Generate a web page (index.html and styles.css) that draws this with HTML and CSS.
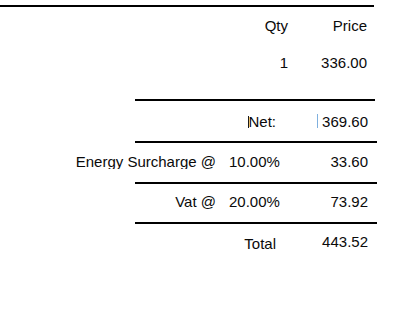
FILE: index.html
```html
<!DOCTYPE html>
<html>
<head>
<meta charset="utf-8">
<link rel="stylesheet" href="styles.css">
</head>
<body>
<div class="sheet">
  <div class="rule-top"></div>
  <div class="row head">
    <div class="cell"></div>
    <div class="cell mid-r">Qty</div>
    <div class="cell val price">Price</div>
  </div>
  <div class="row item">
    <div class="cell"></div>
    <div class="cell mid-r">1</div>
    <div class="cell val price">336.00</div>
  </div>
  <div class="rule rule-first"></div>
  <div class="row sum sum-net">
    <div class="cell"></div>
    <div class="cell mid-lbl"><span class="caret-dark">Net:</span></div>
    <div class="cell val"><span class="caret-blue">369.60</span></div>
  </div>
  <div class="rule"></div>
  <div class="row sum sum-energy">
    <div class="cell lbl clip">Energy Surcharge @</div>
    <div class="cell pct">10.00%</div>
    <div class="cell val">33.60</div>
  </div>
  <div class="rule"></div>
  <div class="row sum sum-vat">
    <div class="cell lbl">Vat @</div>
    <div class="cell pct">20.00%</div>
    <div class="cell val">73.92</div>
  </div>
  <div class="rule"></div>
  <div class="row sum sum-total">
    <div class="cell"></div>
    <div class="cell mid-lbl total-lbl">Total</div>
    <div class="cell val">443.52</div>
  </div>
</div>
</body>
</html>
```

FILE: styles.css
```css
html, body {
  margin: 0;
  padding: 0;
  background: #ffffff;
}

body {
  font-family: "Liberation Sans", Arial, sans-serif;
  font-size: 15px;
  line-height: 17px;
  color: #0a0a0a;
}

.sheet {
  width: 377px;
}

.rule-top {
  width: 374px;
  height: 2px;
  margin-top: 5px;
  background: #000000;
}

.rule {
  height: 2px;
  margin-left: 135px;
  background: #000000;
}

.rule-first {
  width: 240px;
  margin-top: 28px;
}

.row {
  display: grid;
  grid-template-columns: 224px 64px 89px;
  align-items: start;
  box-sizing: border-box;
}

.head {
  padding-top: 10px;
}

.item {
  padding-top: 20px;
}

.cell {
  white-space: nowrap;
}

.mid-r {
  text-align: right;
}

.mid-lbl {
  text-align: right;
  padding-right: 12px;
}

.lbl {
  text-align: right;
  padding-right: 8px;
}

.clip {
  height: 16px;
  overflow: hidden;
}

.pct {
  padding-left: 5px;
}

.val {
  text-align: right;
  padding-right: 9px;
}

.val.price {
  padding-right: 10px;
}

.sum-net {
  height: 40px;
  padding-top: 12px;
}

.sum-energy {
  height: 39px;
  padding-top: 10px;
}

.sum-vat {
  height: 38px;
  padding-top: 9px;
}

.sum-total {
  padding-top: 9px;
}

.total-lbl {
  padding-top: 2px;
}

.caret-dark::before {
  content: "";
  display: inline-block;
  width: 1px;
  height: 12px;
  margin-right: -1px;
  background: #1a1a1a;
  vertical-align: -1px;
}

.caret-blue::before {
  content: "";
  display: inline-block;
  width: 1px;
  height: 14px;
  margin-right: 4px;
  background: #7fb0de;
  vertical-align: -1px;
}
```
